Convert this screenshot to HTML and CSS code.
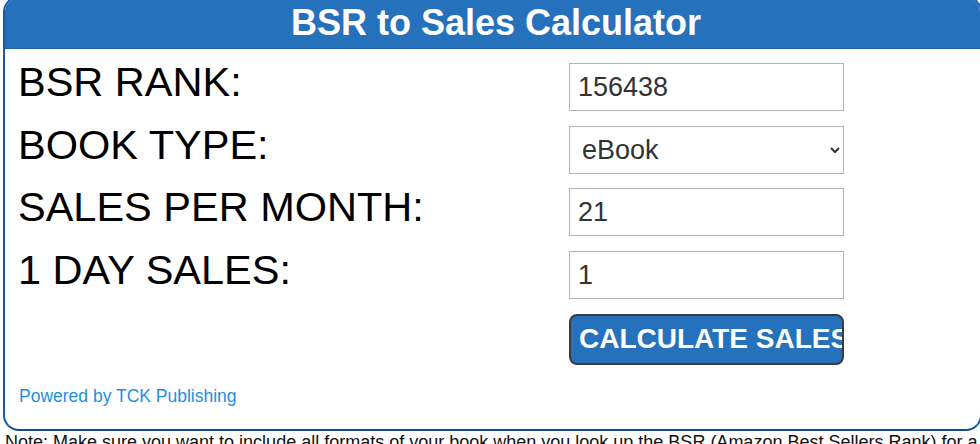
FILE: index.html
```html
<!DOCTYPE html>
<html lang="en">
<head>
    <meta charset="UTF-8">
    <meta name="viewport" content="width=device-width, initial-scale=1.0">
    <title>BSR to Sales Calculator</title>
    <link rel="stylesheet" href="styles.css">
</head>
<body>
    <div class="calc-box">
        <h2 class="calc-title">BSR to Sales Calculator</h2>

        <form class="calc-form" onsubmit="return false;">
            <label class="calc-label" for="bsr">BSR RANK:</label>
            <input class="calc-input" id="bsr" type="text" value="156438">

            <label class="calc-label" for="book-type">BOOK TYPE:</label>
            <select class="calc-input calc-select" id="book-type">
                <option>eBook</option>
                <option>Paperback</option>
                <option>Hardcover</option>
            </select>

            <label class="calc-label" for="month-sales">SALES PER MONTH:</label>
            <input class="calc-input" id="month-sales" type="text" value="21">

            <label class="calc-label" for="day-sales">1 DAY SALES:</label>
            <input class="calc-input" id="day-sales" type="text" value="1">

            <span></span>
            <button class="calc-btn" type="button">CALCULATE SALES</button>
        </form>

        <a class="powered" href="#">Powered by TCK Publishing</a>
    </div>

    <p class="note">Note: Make sure you want to include all formats of your book when you look up the BSR (Amazon Best Sellers Rank) for a title.</p>
</body>
</html>
```

FILE: styles.css
```css
* {
    margin: 0;
    padding: 0;
    box-sizing: border-box;
}

body {
    font-family: 'Liberation Sans', Arial, sans-serif;
    background: #fff;
    overflow: hidden;
}

.calc-box {
    width: 979px;
    margin: -4px 0 0 3px;
    border: 2px solid #1a5aa3;
    border-bottom-color: #0f4a93;
    border-radius: 16px;
    overflow: hidden;
    padding-bottom: 23px;
}

.calc-title {
    height: 51px;
    line-height: 50px;
    padding-left: 7px;
    background: #2571bc;
    border-bottom: 1px solid #1b62b0;
    color: #fff;
    font-size: 36px;
    font-weight: bold;
    text-align: center;
}

.calc-form {
    display: grid;
    grid-template-columns: 551px 275px;
    row-gap: 14.7px;
    padding: 14px 0 0 13px;
}

.calc-label {
    font-size: 41.5px;
    line-height: 38px;
    color: #000;
}

.calc-input {
    height: 48px;
    border: 1px solid #b4b4b4;
    background: #fff;
    padding: 0 8px;
    font-family: 'Liberation Sans', Arial, sans-serif;
    font-size: 27px;
    color: #333;
    outline: none;
}

.calc-select {
    padding: 0 10px 0 8px;
}

.calc-btn {
    height: 51px;
    border: 2px solid #3c3c3c;
    border-radius: 8px;
    background: #2571bc;
    color: #fff;
    font-family: 'Liberation Sans', Arial, sans-serif;
    font-size: 28px;
    font-weight: bold;
    text-align: left;
    white-space: nowrap;
    overflow: hidden;
    padding: 0 0 0 8px;
    cursor: pointer;
}

.powered {
    display: block;
    margin: 21px 0 0 14px;
    font-size: 17.5px;
    line-height: 20px;
    color: #1e8fe6;
    text-decoration: none;
}

.note {
    margin: 1px 0 0 5px;
    font-size: 18px;
    line-height: 20px;
    color: #111;
    white-space: nowrap;
}
```
